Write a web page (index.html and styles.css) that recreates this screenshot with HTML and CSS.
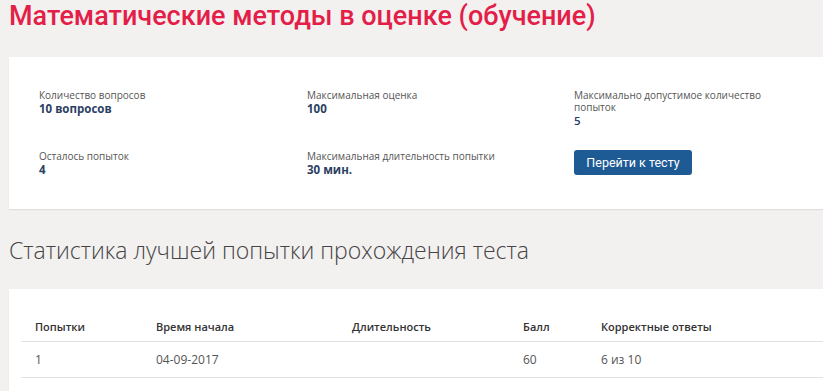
FILE: index.html
```html
<!DOCTYPE html>
<html lang="ru">
  <head>
    <meta charset="UTF-8" />
    <meta name="viewport" content="width=device-width, initial-scale=1.0" />
    <title>Математические методы в оценке (обучение)</title>
    <link rel="stylesheet" href="styles.css">
  </head>
  <body>
    <h1 class="page-title">Математические методы в оценке (обучение)</h1>

    <div class="card info-card">
      <div class="info-grid">
        <div class="info-item">
          <div class="info-label">Количество вопросов</div>
          <div class="info-value">10 вопросов</div>
        </div>
        <div class="info-item">
          <div class="info-label">Максимальная оценка</div>
          <div class="info-value">100</div>
        </div>
        <div class="info-item">
          <div class="info-label">Максимально допустимое количество попыток</div>
          <div class="info-value info-value-plain">5</div>
        </div>
        <div class="info-item">
          <div class="info-label">Осталось попыток</div>
          <div class="info-value">4</div>
        </div>
        <div class="info-item">
          <div class="info-label">Максимальная длительность попытки</div>
          <div class="info-value">30 мин.</div>
        </div>
        <div class="info-item">
          <button class="start-button">Перейти к тесту</button>
        </div>
      </div>
    </div>

    <h2 class="section-title">Статистика лучшей попытки прохождения теста</h2>

    <div class="card stats-card">
      <table class="stats-table">
        <thead>
          <tr>
            <th class="col-try">Попытки</th>
            <th class="col-start">Время начала</th>
            <th class="col-duration">Длительность</th>
            <th class="col-score">Балл</th>
            <th>Корректные ответы</th>
          </tr>
        </thead>
        <tbody>
          <tr>
            <td>1</td>
            <td>04-09-2017</td>
            <td></td>
            <td>60</td>
            <td>6 из 10</td>
          </tr>
        </tbody>
      </table>
    </div>
  </body>
</html>
```

FILE: styles.css
```css
body {
  margin: 0;
  padding: 0 0 0 9px;
  background-color: #f3f0f0;
  font-family: "Open Sans", Arial, sans-serif;
  color: #444;
  overflow: hidden;
}

.page-title {
  margin: 0;
  height: 57px;
  font-family: Roboto, Arial, sans-serif;
  font-weight: 500;
  font-size: 27px;
  line-height: 32px;
  color: #e31e48;
}

.card {
  background-color: #ffffff;
  box-shadow: 0 1px 1px rgba(0, 0, 0, 0.08);
}

.info-card {
  padding: 32px 30px 31px 30px;
}

.info-grid {
  display: grid;
  grid-template-columns: 268px 267px 196px;
  row-gap: 21px;
}

.info-label {
  font-size: 10px;
  line-height: 12px;
  color: #555;
}

.info-value {
  font-size: 11.5px;
  line-height: 16px;
  font-weight: 700;
  color: #2b3f63;
}

.info-value-plain {
  font-weight: 600;
}

.start-button {
  width: 118px;
  height: 25px;
  padding: 0;
  border: none;
  border-radius: 3px;
  background-color: #1e5a94;
  color: #ffffff;
  font-family: Roboto, Arial, sans-serif;
  font-size: 12.5px;
  cursor: pointer;
}

.section-title {
  margin: 0;
  padding: 26px 0 0 0;
  height: 54px;
  font-weight: 300;
  font-size: 23px;
  line-height: 30px;
  color: #444;
}

.stats-card {
  padding: 23px 0 0 12px;
  height: 120px;
}

.stats-table {
  width: 100%;
  border-collapse: collapse;
  font-size: 12px;
}

.stats-table th {
  height: 29px;
  padding: 0 0 0 14px;
  text-align: left;
  font-size: 11px;
  font-weight: 600;
  color: #333;
  border-bottom: 1px solid #e2e2e2;
}

.stats-table td {
  height: 35px;
  padding: 0 0 0 14px;
  color: #555;
  border-bottom: 1px solid #e2e2e2;
}

.col-try {
  width: 107px;
}

.col-start {
  width: 182px;
}

.col-duration {
  width: 157px;
}

.col-score {
  width: 64px;
}
```
